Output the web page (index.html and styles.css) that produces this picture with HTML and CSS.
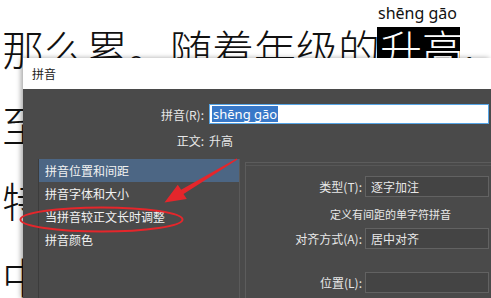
FILE: index.html
```html
<!DOCTYPE html>
<html lang="zh-CN">
<head>
  <meta charset="UTF-8">
  <title>拼音</title>
  <link rel="stylesheet" href="styles.css">
</head>
<body>

<!-- document text behind the dialog -->
<div class="page">
  <p class="line">那么累。随着年级的<span class="hl">升高<span class="py">shēng gāo</span></span>，</p>
  <p class="line">至</p>
  <p class="line">特</p>
  <p class="line">中</p>
</div>

<!-- pinyin dialog -->
<div class="dialog">
  <div class="titlebar">拼音</div>
  <div class="dlg-body">
    <div class="field">
      <span class="lbl">拼音(R):</span>
      <div class="input"><span class="sel">shēng gāo</span></div>
    </div>
    <div class="field second">
      <span class="lbl">正文:</span>
      <span class="val">升高</span>
    </div>
    <div class="lower">
      <ul class="nav">
        <li class="on">拼音位置和间距</li>
        <li>拼音字体和大小</li>
        <li>当拼音较正文长时调整</li>
        <li>拼音颜色</li>
      </ul>
      <div class="group">
        <div class="grow"><span class="glbl">类型(T):</span><div class="ctl">逐字加注</div></div>
        <div class="desc">定义有间距的单字符拼音</div>
        <div class="grow"><span class="glbl">对齐方式(A):</span><div class="ctl">居中对齐</div></div>
        <div class="grow spaced"><span class="glbl">位置(L):</span><div class="ctl"></div></div>
      </div>
    </div>
  </div>
</div>

<!-- red annotation -->
<svg class="marks" width="491" height="298" viewBox="0 0 491 298">
  <ellipse cx="101.5" cy="219.5" rx="81" ry="12" fill="none" stroke="#e5262b" stroke-width="2"/>
  <polygon points="237.5,159.6 183.5,194 186.8,199 164.5,202.5 177.8,184.8 181.1,189.8 236.5,158.4" fill="#e5262b"/>
</svg>

</body>
</html>
```

FILE: styles.css
```css
body { margin:0; width:491px; height:298px; overflow:hidden; position:relative; background:#fff; }

.page { height:298px; overflow:hidden; box-sizing:border-box; padding:10px 0 0 2px; font-family:"Noto Sans CJK SC",sans-serif; font-size:42px; font-weight:300; color:#111; }
.line { margin:0; height:76px; line-height:76px; white-space:nowrap; }
.hl { display:inline-block; position:relative; vertical-align:top; margin:17px 0 0 -3px; padding-left:3px; width:80px; height:42px; line-height:42px; background:#000; color:#fff; }
.py { position:absolute; left:1px; top:-24px; font-family:"Noto Sans",sans-serif; font-size:16px; font-weight:400; line-height:20px; color:#111; }

.dialog { position:absolute; left:23px; top:58px; width:468px; height:240px; overflow:hidden; background:#4a4a4a; box-shadow:-2px 0 5px rgba(0,0,0,.35); font-family:"Noto Sans CJK SC",sans-serif; font-size:12px; color:#e8e8e8; }
.titlebar { height:31px; line-height:31px; padding-left:9px; background:#fff; color:#222; }
.dlg-body { padding-top:15px; }

.field { display:flex; align-items:center; height:20px; }
.field.second { margin-top:6px; }
.lbl { width:186px; padding-right:5px; box-sizing:border-box; text-align:right; }
.input { width:280px; height:20px; box-sizing:border-box; display:flex; align-items:center; padding-left:2px; background:#fff; border:1px solid #56a5e6; }
.sel { padding:0 1px; font-family:"Noto Sans",sans-serif; font-size:13px; line-height:16px; background:#3878c8; color:#fff; }

.lower { display:flex; margin:9px 0 0 15px; }
.nav { list-style:none; margin:0; padding:0; width:202px; height:160px; box-sizing:border-box; border-left:1px solid #3c3c3c; border-right:1px solid #5a5a5a; }
.nav li { height:23px; line-height:23px; padding-left:6px; white-space:nowrap; color:#f2f2f2; }
.nav li.on { background:#4c6684; }

.group { flex:1; margin:3px 0 0 5px; padding-top:13px; border-left:1px solid #5c5c5c; border-top:1px solid #5c5c5c; box-shadow:inset 0 2px 0 #4a4a4a, inset 0 3px 0 #575757; }
.grow { display:flex; align-items:center; height:21px; }
.grow.spaced { margin-top:23px; }
.glbl { width:119px; padding-right:3px; box-sizing:border-box; text-align:right; white-space:nowrap; }
.ctl { width:124px; height:21px; box-sizing:border-box; padding-left:5px; line-height:19px; background:#444; border:1px solid #626262; }
.desc { height:14px; line-height:14px; margin:10px 0 7px; padding-left:84px; font-size:11px; white-space:nowrap; }

.marks { position:absolute; left:0; top:0; pointer-events:none; }
```
